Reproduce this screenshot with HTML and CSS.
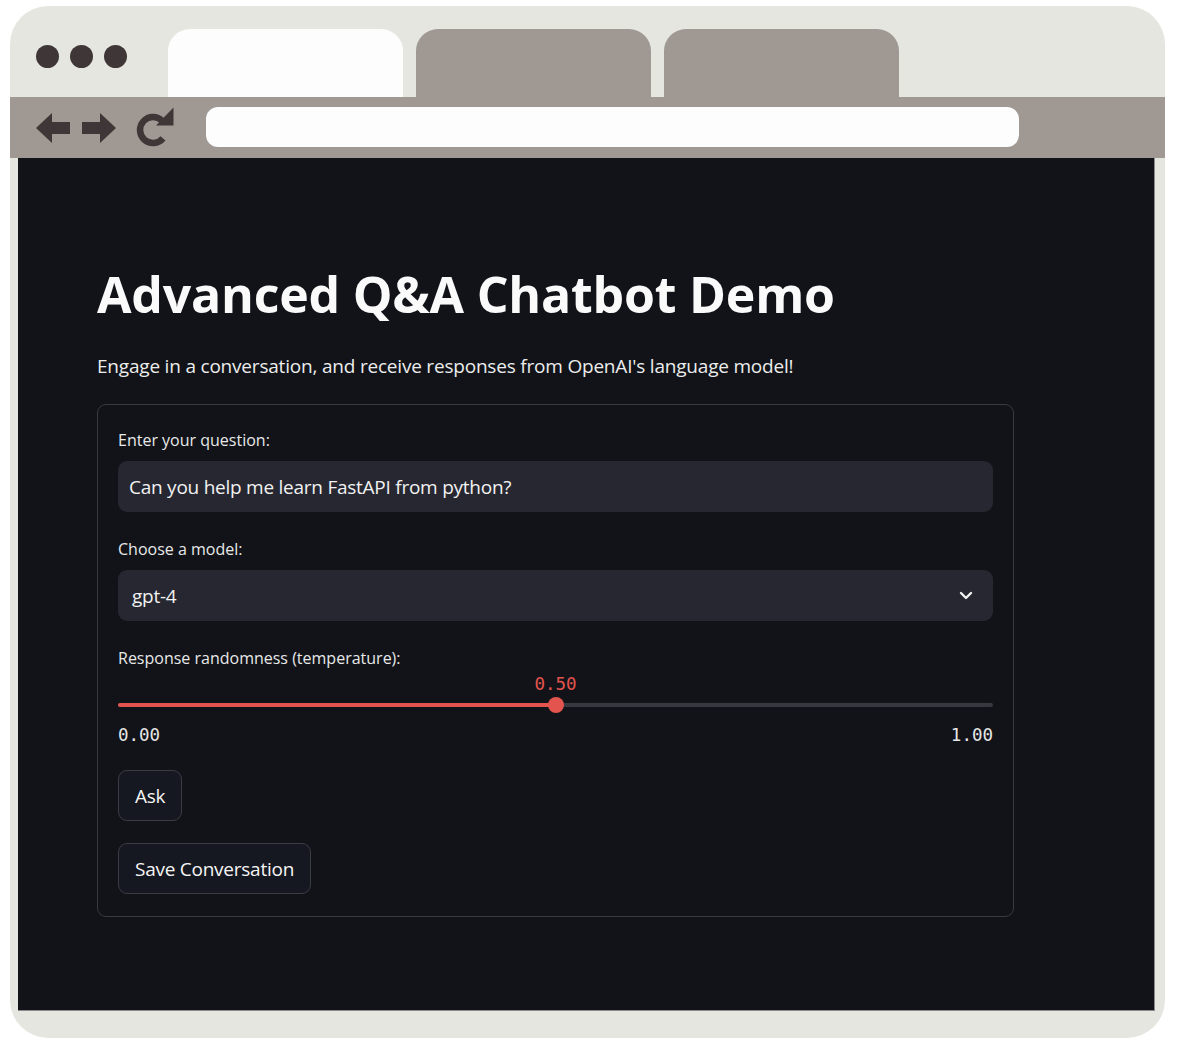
FILE: index.html
```html
<!DOCTYPE html>
<html lang="en">
<head>
<meta charset="utf-8">
<title>Advanced Q&amp;A Chatbot Demo</title>
<link rel="stylesheet" href="styles.css">
</head>
<body>
<div class="window">
  <div class="tabbar">
    <div class="dots"><span class="dot"></span><span class="dot"></span><span class="dot"></span></div>
    <div class="tabs">
      <div class="tab tab-active"></div>
      <div class="tab"></div>
      <div class="tab"></div>
    </div>
  </div>
  <div class="toolbar">
    <div class="nav">
      <svg class="arrow" width="34" height="30" viewBox="0 0 34 30"><path d="M0 15 L16 0 L16 9 L34 9 L34 21 L16 21 L16 30 Z" fill="#3f3737"/></svg>
      <svg class="arrow" width="34" height="30" viewBox="0 0 34 30"><path d="M34 15 L18 0 L18 9 L0 9 L0 21 L18 21 L18 30 Z" fill="#3f3737"/></svg>
      <svg class="reload" width="40" height="40" viewBox="0 0 40 40"><path d="M26.2 13.8 A13 13 0 1 0 27 31.4" fill="none" stroke="#3f3737" stroke-width="6.5"/><path d="M20 18.5 L37.5 18.5 L37.5 0.5 Z" fill="#3f3737"/></svg>
    </div>
    <div class="address"></div>
  </div>
  <div class="content">
    <h1 class="title">Advanced Q&amp;A Chatbot Demo</h1>
    <p class="subtitle">Engage in a conversation, and receive responses from OpenAI's language model!</p>
    <div class="form">
      <div class="label">Enter your question:</div>
      <div class="input">Can you help me learn FastAPI from python?</div>
      <div class="label label-gap">Choose a model:</div>
      <div class="select">
        <span>gpt-4</span>
        <svg class="chevron" width="14" height="9" viewBox="0 0 14 9"><path d="M2 2 L7 7 L12 2" fill="none" stroke="#f2f2f2" stroke-width="2.4" stroke-linecap="round" stroke-linejoin="round"/></svg>
      </div>
      <div class="label label-gap">Response randomness (temperature):</div>
      <div class="slider">
        <div class="slider-value" style="left: 50%;">0.50</div>
        <div class="track">
          <div class="track-fill" style="width: 50%;"></div>
          <div class="thumb" style="left: 50%;"></div>
        </div>
        <div class="ticks"><span>0.00</span><span>1.00</span></div>
      </div>
      <div class="buttons">
        <div class="button">Ask</div>
        <div class="button">Save Conversation</div>
      </div>
    </div>
  </div>
</div>
</body>
</html>
```

FILE: styles.css
```css
* { box-sizing: border-box; }
html, body { margin: 0; padding: 0; background: #ffffff; }
body { width: 1178px; height: 1048px; overflow: hidden; font-family: "Open Sans", "Noto Sans", sans-serif; }

.window {
  margin: 6px 13px 0 10px;
  width: 1155px;
  height: 1032px;
  background: #e6e6e1;
  border-radius: 38px;
  overflow: hidden;
  display: flex;
  flex-direction: column;
}

.tabbar {
  height: 91px;
  display: flex;
  align-items: flex-end;
  padding-left: 26px;
  flex-shrink: 0;
}
.dots {
  align-self: flex-start;
  margin-top: 39px;
  display: flex;
  gap: 11px;
}
.dot { width: 23px; height: 23px; border-radius: 50%; background: #3f3737; }
.tabs { display: flex; gap: 13px; margin-left: 41px; }
.tab {
  width: 235px;
  height: 68px;
  background: #a09893;
  border-radius: 22px 22px 0 0;
}
.tab-active { background: #fdfdfd; }

.toolbar {
  height: 61px;
  background: #a09893;
  display: flex;
  align-items: center;
  padding-left: 26px;
  flex-shrink: 0;
}
.nav { display: flex; align-items: center; }
.arrow + .arrow { margin-left: 12px; }
.reload { margin-left: 20px; margin-top: -1px; }
.address {
  margin-left: 30px;
  width: 813px;
  height: 40px;
  background: #fdfdfd;
  border-radius: 12px;
  margin-top: -1px;
}

.content {
  margin: 0 10px 0 8px;
  height: 853px;
  background: #111318;
  border-right: 1px solid #8a8a8a;
  border-bottom: 1px solid #8a8a8a;
  padding: 106px 140px 0 79px;
  color: #fafafa;
}

.title {
  margin: 0;
  font-size: 50px;
  line-height: 60px;
  font-weight: 700;
  letter-spacing: -0.2px;
  color: #fafafa;
}
.subtitle {
  margin: 28px 0 0 0;
  font-size: 19px;
  line-height: 28px;
  color: #ececec;
  letter-spacing: -0.2px;
}

.form {
  margin-top: 24px;
  border: 1px solid #393a40;
  border-radius: 9px;
  padding: 24px 20px 22px 20px;
}
.label {
  font-size: 16px;
  line-height: 22px;
  color: #e8e8e8;
  letter-spacing: 0;
}
.label-gap { margin-top: 26px; }

.input, .select {
  margin-top: 10px;
  height: 51px;
  background: #262730;
  border-radius: 9px;
  display: flex;
  align-items: center;
  font-size: 19px;
  color: #f2f2f2;
  letter-spacing: -0.25px;
}
.input { padding-left: 11px; }
.select { padding: 0 20px 0 14px; justify-content: space-between; }
.chevron { display: block; }

.slider {
  position: relative;
  margin-top: 5px;
  padding-top: 29px;
}
.slider-value {
  position: absolute;
  top: 0;
  transform: translateX(-50%);
  font-family: "DejaVu Sans Mono", "Liberation Mono", monospace;
  font-size: 17.5px;
  line-height: 20px;
  color: #e2544d;
}
.track {
  position: relative;
  height: 4px;
  border-radius: 2px;
  background: #373840;
}
.track-fill {
  height: 4px;
  border-radius: 2px;
  background: #e2544d;
}
.thumb {
  position: absolute;
  top: -6px;
  width: 16px;
  height: 16px;
  margin-left: -8px;
  border-radius: 50%;
  background: #e2544d;
}
.ticks {
  display: flex;
  justify-content: space-between;
  margin-top: 18px;
  font-family: "DejaVu Sans Mono", "Liberation Mono", monospace;
  font-size: 17.5px;
  line-height: 20px;
  color: #e6e6e6;
}

.buttons {
  margin-top: 25px;
  display: flex;
  flex-direction: column;
  align-items: flex-start;
  gap: 22px;
}
.button {
  height: 51px;
  padding: 0 16px;
  display: flex;
  align-items: center;
  border: 1px solid #3b3d45;
  border-radius: 9px;
  background: #161821;
  font-size: 19px;
  color: #f5f5f5;
  letter-spacing: -0.25px;
}
```
